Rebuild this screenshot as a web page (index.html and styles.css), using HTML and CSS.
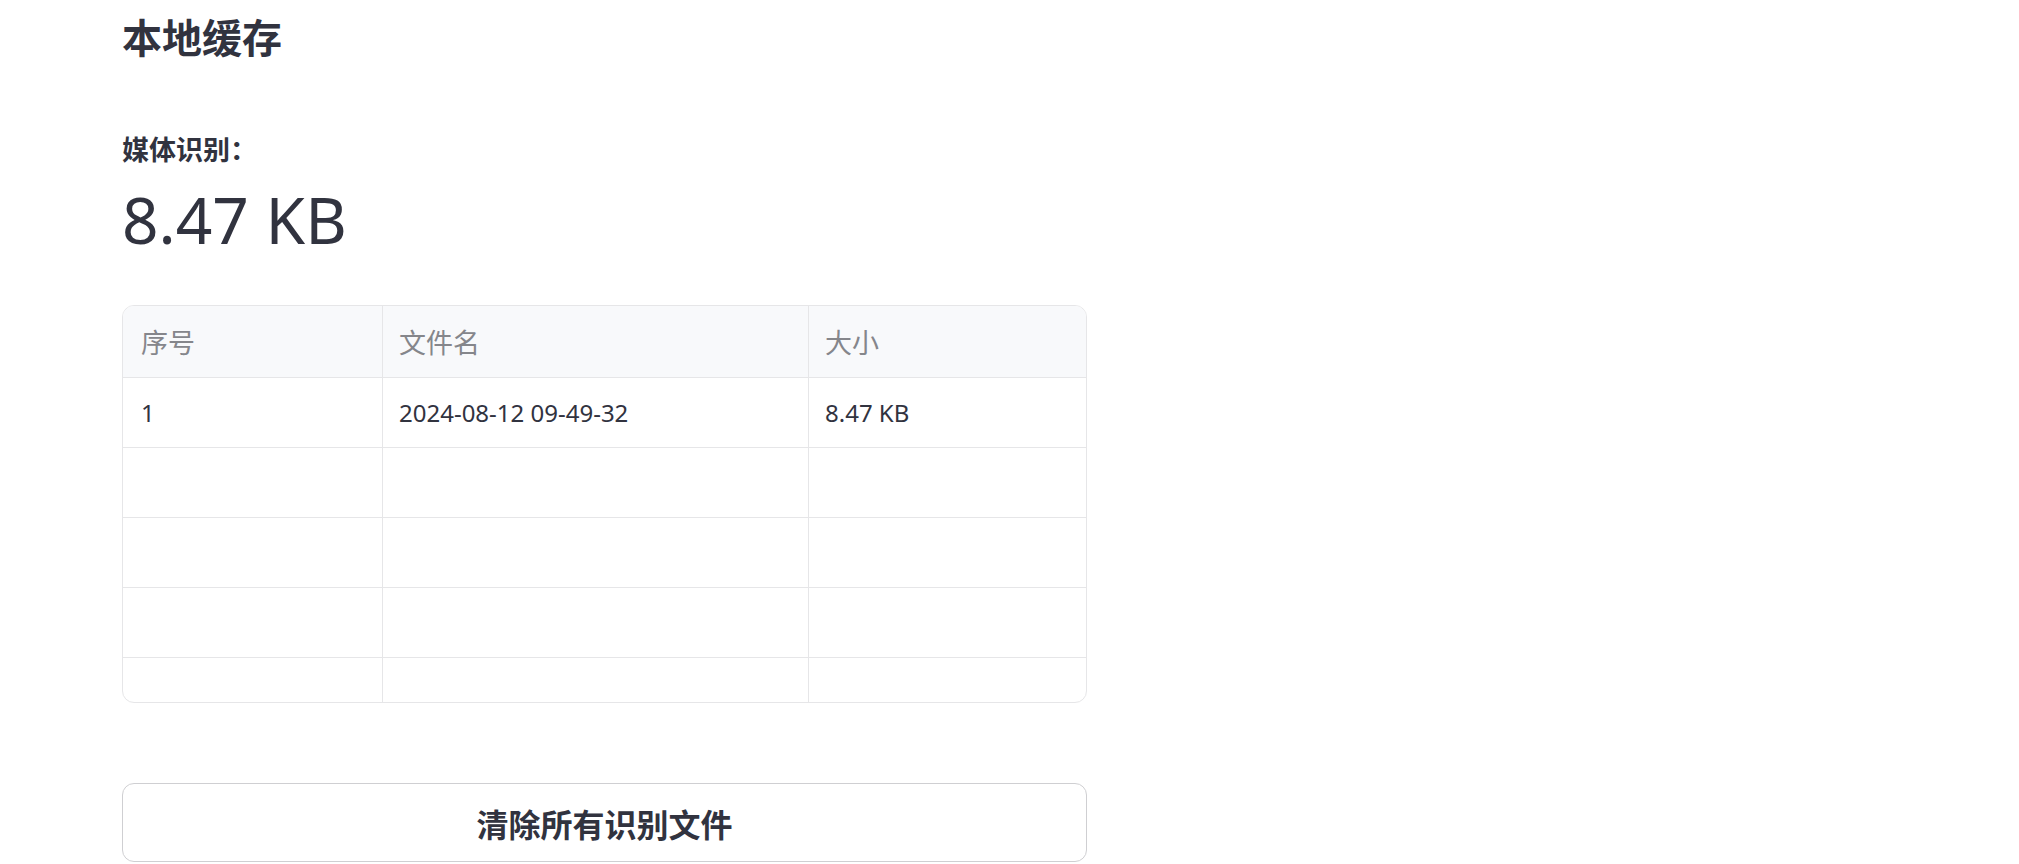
FILE: index.html
```html
<!DOCTYPE html>
<html>
  <head>
    <title>本地缓存</title>
    <link rel="stylesheet" href="styles.css">
  </head>
  <body>
    <div class="main">
      <h2 class="page-title">本地缓存</h2>

      <div class="metric">
        <div class="metric-label">媒体识别：</div>
        <div class="metric-value">8.47 KB</div>
      </div>

      <div class="table-wrap">
        <table class="cache-table">
          <thead>
            <tr>
              <th class="col-index">序号</th>
              <th class="col-name">文件名</th>
              <th class="col-size">大小</th>
            </tr>
          </thead>
          <tbody>
            <tr>
              <td>1</td>
              <td>2024-08-12 09-49-32</td>
              <td>8.47 KB</td>
            </tr>
            <tr><td></td><td></td><td></td></tr>
            <tr><td></td><td></td><td></td></tr>
            <tr><td></td><td></td><td></td></tr>
            <tr><td></td><td></td><td></td></tr>
          </tbody>
        </table>
      </div>

      <button type="button" class="clear-button">清除所有识别文件</button>
    </div>
  </body>
</html>
```

FILE: styles.css
```css
body {
  margin: 0;
  background-color: #fff;
  color: #31333f;
  font-family: "Noto Sans", "Noto Sans CJK SC", sans-serif;
}
.main {
  width: 965px;
  padding: 14px 0 0 122px;
}
.page-title {
  margin: 0;
  font-size: 40px;
  line-height: 48px;
  font-weight: 700;
}
.metric {
  margin-top: 70px;
}
.metric-label {
  font-size: 27px;
  line-height: 36px;
  font-weight: 700;
}
.metric-value {
  margin-top: 12px;
  font-size: 64px;
  line-height: 80px;
  font-weight: 400;
}
.table-wrap {
  margin-top: 45px;
  height: 398px;
  box-sizing: border-box;
  border: 1px solid #e6e6e8;
  border-radius: 12px;
  overflow: hidden;
}
.cache-table {
  width: 100%;
  border-collapse: collapse;
  table-layout: fixed;
}
.cache-table th,
.cache-table td {
  border-right: 1px solid #e6e6e8;
  border-bottom: 1px solid #e6e6e8;
  padding: 0 0 0 16px;
  text-align: left;
  white-space: nowrap;
}
.cache-table th:last-child,
.cache-table td:last-child {
  border-right: none;
}
.cache-table th {
  height: 71px;
  background-color: #f8f9fb;
  color: #85868b;
  font-size: 27px;
  font-weight: 400;
}
.cache-table td {
  height: 69px;
  font-size: 24px;
}
.cache-table td:first-child,
.cache-table th:first-child {
  padding-left: 18px;
}
.col-index {
  width: 241px;
}
.col-name {
  width: 409px;
}
.clear-button {
  display: block;
  width: 100%;
  height: 79px;
  margin-top: 80px;
  background-color: #fff;
  border: 1px solid #cfcfd2;
  border-radius: 12px;
  color: #31333f;
  font-family: "Noto Sans", "Noto Sans CJK SC", sans-serif;
  font-size: 32px;
  font-weight: 700;
  cursor: pointer;
}
```
